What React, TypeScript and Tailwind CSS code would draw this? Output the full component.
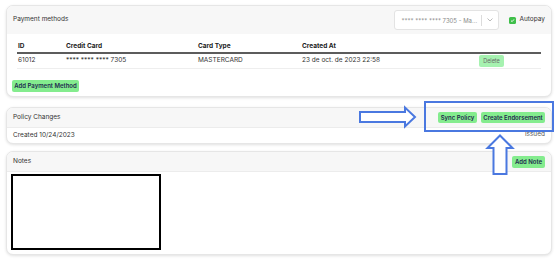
import React from "react";

const font = { fontFamily: "Inter, 'Liberation Sans', sans-serif" };

function GreenBtn({ children, className = "" }: { children: React.ReactNode; className?: string }) {
  return (
    <div
      className={`flex items-center justify-center whitespace-nowrap rounded-[2px] bg-[#84ec8e] text-[6px] font-semibold leading-none text-[#1d2b4f] ${className}`}
    >
      {children}
    </div>
  );
}

export default function App() {
  return (
    <div className="relative h-[259px] w-[559px] overflow-hidden bg-white text-[#333]" style={font}>
      <div className="flex flex-col pl-[6px] pt-[5px]">
        {/* Payment methods */}
        <div className="w-[546px] overflow-hidden rounded-[7px] border border-[#e6e6e6] bg-white shadow-[0_1px_3px_rgba(0,0,0,0.12)]">
          <div className="flex h-[28px] items-center justify-between bg-[#f7f7f7] pl-[6px] pr-[6px]">
            <span className="text-[6.5px] text-[#333]">Payment methods</span>
            <div className="flex items-center gap-[10px]">
              <div className="flex h-[20px] w-[105px] items-center rounded-[3px] border border-[#e3e3e3] bg-white pl-[6px]">
                <span className="flex-1 whitespace-nowrap text-[6px] text-[#8a8a8a]">**** **** **** 7305 - Ma...</span>
                <div className="h-[11px] w-px bg-[#dcdcdc]" />
                <svg width="16" height="10" viewBox="0 0 16 10" className="shrink-0">
                  <path d="M5.5 3.5 L8 6 L10.5 3.5" fill="none" stroke="#aaa" strokeWidth="0.8" />
                </svg>
              </div>
              <div className="flex items-center gap-[3px]">
                <div className="flex h-[7px] w-[7px] items-center justify-center rounded-[1.5px] bg-[#3fbf4a]">
                  <svg width="5" height="5" viewBox="0 0 10 10">
                    <path d="M2 5.2 L4.2 7.3 L8 2.8" fill="none" stroke="white" strokeWidth="1.8" />
                  </svg>
                </div>
                <span className="text-[6.5px] text-[#333]">Autopay</span>
              </div>
            </div>
          </div>
          <div className="px-[5px] pb-[4px] pt-[8px]">
            <div className="mx-[5px]">
              <div className="flex h-[12px] items-center border-b-2 border-[#5c5c5c] pl-[1px] text-[6.5px] font-bold text-[#222]">
                <span className="w-[48px]">ID</span>
                <span className="w-[132px]">Credit Card</span>
                <span className="w-[104px]">Card Type</span>
                <span>Created At</span>
              </div>
              <div className="flex h-[15px] items-center border-b border-[#eeeeee] pl-[1px] text-[6.5px] text-[#333]">
                <span className="w-[48px]">61012</span>
                <span className="w-[132px]">**** **** **** 7305</span>
                <span className="w-[104px]">MASTERCARD</span>
                <span className="w-[177px]">23 de oct. de 2023 22:58</span>
                <div className="flex h-[12px] w-[25px] items-center justify-center rounded-[2px] bg-[#a6f2b0] text-[5.5px] text-[#6b6b6b]">
                  Delete
                </div>
              </div>
            </div>
            <GreenBtn className="mt-[11px] h-[12px] w-[67px]">Add Payment Method</GreenBtn>
          </div>
        </div>

        {/* Policy Changes */}
        <div className="mt-[10px] w-[546px] overflow-hidden rounded-[7px] border border-[#e6e6e6] bg-white shadow-[0_1px_3px_rgba(0,0,0,0.12)]">
          <div className="flex h-[20px] items-center justify-between border-b border-[#ececec] bg-[#f7f7f7] pl-[6px] pr-[6px]">
            <span className="text-[6.5px] text-[#333]">Policy Changes</span>
            <div className="flex items-center gap-[4px]">
              <GreenBtn className="h-[11px] w-[39px]">Sync Policy</GreenBtn>
              <GreenBtn className="h-[11px] w-[64px]">Create Endorsement</GreenBtn>
            </div>
          </div>
          <div className="flex h-[15px] items-center justify-between pl-[6px] pr-[6px]">
            <span className="text-[6.5px] text-[#333]">Created 10/24/2023</span>
            <span className="mb-[2px] text-[6.5px] text-[#555]">issued</span>
          </div>
        </div>

        {/* Notes */}
        <div className="mt-[7px] w-[546px] overflow-hidden rounded-[7px] border border-[#e6e6e6] bg-white shadow-[0_1px_3px_rgba(0,0,0,0.12)]">
          <div className="flex h-[20px] items-center justify-between border-b border-[#ececec] bg-[#f7f7f7] pl-[6px] pr-[6px]">
            <span className="text-[6.5px] text-[#333]">Notes</span>
            <GreenBtn className="h-[12px] w-[33px]">Add Note</GreenBtn>
          </div>
          <div className="px-[4px] pb-[4px] pt-[2px]">
            <div className="h-[76px] w-[150px] border-2 border-black bg-white" />
          </div>
        </div>
      </div>

      {/* Annotation overlay */}
      <svg className="pointer-events-none absolute left-0 top-0" width="559" height="259" viewBox="0 0 559 259">
        <rect x="425" y="102" width="128" height="29" fill="none" stroke="#4a78e0" strokeWidth="2" />
        <polygon
          points="360,112 405,112 405,107.5 415,117 405,126.5 405,122 360,122"
          fill="white"
          stroke="#4a78e0"
          strokeWidth="2"
          strokeLinejoin="miter"
        />
        <polygon
          points="500,135.5 512.5,148 506.5,148 506.5,174 493.5,174 493.5,148 487.5,148"
          fill="white"
          stroke="#4a78e0"
          strokeWidth="2"
          strokeLinejoin="miter"
        />
      </svg>
    </div>
  );
}
